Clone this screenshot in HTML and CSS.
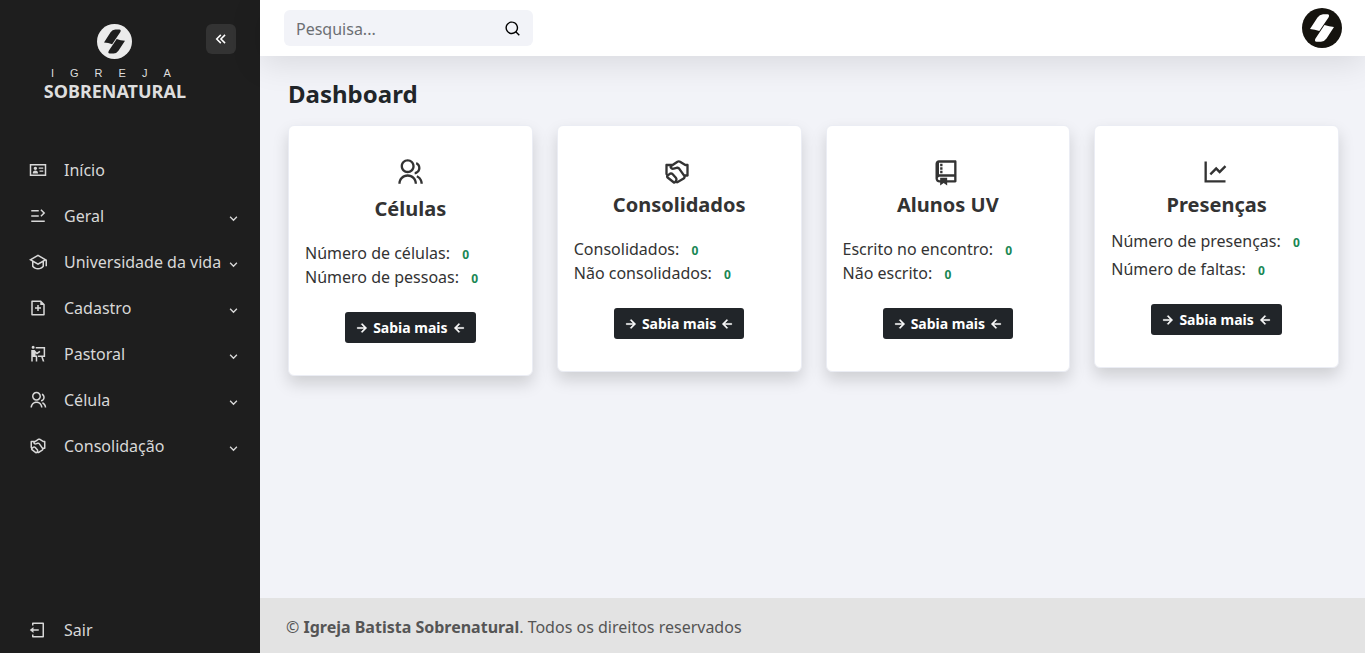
FILE: index.html
```html
<!DOCTYPE html>
<html lang="pt-br">
<head>
<meta charset="utf-8">
<meta name="viewport" content="width=device-width, initial-scale=1">
<title>Dashboard</title>
<link rel="stylesheet" href="styles.css">
</head>
<body>
<svg class="sprite" aria-hidden="true">
  <symbol id="people" viewBox="0 0 24 24"><path d="M2 22C2 17.58 5.58 14 10 14S18 17.58 18 22H16C16 18.69 13.31 16 10 16S4 18.69 4 22ZM10 13C6.685 13 4 10.315 4 7S6.685 1 10 1 16 3.685 16 7 13.315 13 10 13ZM10 11C12.21 11 14 9.21 14 7S12.21 3 10 3 6 4.79 6 7 7.79 11 10 11ZM18.284 14.703C21.064 15.956 23 18.752 23 22H21C21 19.564 19.548 17.467 17.463 16.527ZM17.596 3.413C19.594 4.237 21 6.204 21 8.5 21 11.37 18.804 13.725 16 13.978V11.965C17.697 11.722 19 10.264 19 8.5 19 7.119 18.202 5.926 17.041 5.356Z"/></symbol>
  <symbol id="hands" viewBox="0 0 24 24"><path d="M11.8611 2.39057C12.8495 1.73163 14.1336 1.71797 15.1358 2.35573L19.291 4.99994H20.9998C21.5521 4.99994 21.9998 5.44766 21.9998 5.99994V14.9999C21.9998 15.5522 21.5521 15.9999 20.9998 15.9999H19.4801C19.5396 16.9472 19.0933 17.9102 18.1955 18.4489L13.1021 21.505C12.4591 21.8907 11.6609 21.8817 11.0314 21.4974C10.3311 22.1167 9.2531 22.1849 8.47104 21.5704L3.33028 17.5312C2.56387 16.9291 2.37006 15.9003 2.76579 15.0847C2.28248 14.7057 2 14.1254 2 13.5109V6C2 5.44772 2.44772 5 3 5H7.94693L11.8611 2.39057ZM4.17264 13.6452L4.86467 13.0397C6.09488 11.9632 7.96042 12.0698 9.06001 13.2794L11.7622 16.2518C12.6317 17.2083 12.7903 18.6135 12.1579 19.739L17.1665 16.7339C17.4479 16.5651 17.5497 16.2276 17.4448 15.9433L13.0177 9.74551C12.769 9.39736 12.3264 9.24598 11.9166 9.36892L9.43135 10.1145C8.37425 10.4316 7.22838 10.1427 6.44799 9.36235L6.15522 9.06958C5.58721 8.50157 5.44032 7.69318 5.67935 7H4V13.5109L4.17264 13.6452ZM14.0621 4.04306C13.728 3.83047 13.3 3.83502 12.9705 4.05467L7.56943 7.65537L7.8622 7.94814C8.12233 8.20827 8.50429 8.30456 8.85666 8.19885L11.3419 7.45327C12.5713 7.08445 13.8992 7.53859 14.6452 8.58303L18.5144 13.9999H19.9998V6.99994H19.291C18.9106 6.99994 18.5381 6.89148 18.2172 6.68727L14.0621 4.04306ZM6.18168 14.5448L4.56593 15.9586L9.70669 19.9978L10.4106 18.7659C10.6256 18.3897 10.5738 17.9178 10.2823 17.5971L7.58013 14.6247C7.2136 14.2215 6.59175 14.186 6.18168 14.5448Z"/></symbol>
  <symbol id="book" viewBox="0 0 24 24"><path d="M13 21V23.5L10 21.5L7 23.5V21H6.5C4.567 21 3 19.433 3 17.5V5C3 3.343 4.343 2 6 2H20C20.552 2 21 2.448 21 3V20C21 20.552 20.552 21 20 21H13ZM13 19H19V16H6.5C5.672 16 5 16.672 5 17.5S5.672 19 6.5 19H7V17H13V19ZM19 14V4H6V14.035C6.163 14.012 6.33 14 6.5 14H19ZM7 5H9V7H7V5ZM7 8H9V10H7V8ZM7 11H9V13H7V11Z"/></symbol>
  <symbol id="chart" viewBox="0 0 24 24"><path d="M5 3V19H21V21H3V3H5ZM20.293 6.293L21.707 7.707L16 13.414L13 10.415L8.707 14.707L7.293 13.293L13 7.586L16 10.585Z"/></symbol>
  <symbol id="idcard" viewBox="0 0 24 24"><path d="M1 4H23V20H1ZM3 6V18H21V6ZM5 16.5C5 13.8 6.2 12.8 8.5 12.8S12 13.8 12 16.5ZM8.5 7.5A2.3 2.3 0 1 1 8.5 12.1A2.3 2.3 0 1 1 8.5 7.5ZM13 8.5H19V10.3H13ZM14 12.5H19V14.3H14Z"/></symbol>
  <symbol id="list" viewBox="0 0 24 24"><path d="M3 4H13V6H3ZM3 11H13V13H3ZM3 18H21V20H3ZM16.6 3L21.6 8L16.6 13L15.2 11.6L18.8 8L15.2 4.4Z"/></symbol>
  <symbol id="cap" viewBox="0 0 24 24"><path d="M4 11.333L0 9L12 2L24 9V17.5H22V10.167L20 11.333V18.011L19.777 18.286C17.946 20.55 15.142 22 12 22S6.054 20.55 4.223 18.286L4 18.011ZM6 12.5V17.292C7.467 18.954 9.611 20 12 20S16.533 18.954 18 17.292V12.5L12 16ZM3.969 9L12 13.685L20.031 9L12 4.315Z"/></symbol>
  <symbol id="fileadd" viewBox="0 0 24 24"><path d="M15 4H5V20H19V8H15V4ZM3 3C3 2.444 3.447 2 4 2H16L21 7V21C21 21.549 20.555 22 20 22H4C3.445 22 3 21.545 3 21ZM11 11V8H13V11H16V13H13V16H11V13H8V11Z"/></symbol>
  <symbol id="teach" viewBox="0 0 24 24"><path d="M5.500 1A2 2 0 1 1 5.500 5A2 2 0 1 1 5.500 1ZM9 2.500H21.500V16H18.500L20.500 22H18.300L16.300 16H12V14H19.500V4.500H9ZM3 6.500H7.500L10.500 10L14 7.500L15.200 9.200L10.500 12.500L8.800 11V14H11V22H9V16H5V22H3Z"/></symbol>
  <symbol id="exit" viewBox="0 0 24 24"><path d="M4 18H6V20H18V4H6V6H4V3C4 2.448 4.448 2 5 2H19C19.552 2 20 2.448 20 3V21C20 21.552 19.552 22 19 22H5C4.448 22 4 21.552 4 21ZM6 11H13V13H6V16L1 12L6 8Z"/></symbol>
  <symbol id="search" viewBox="0 0 24 24"><path d="M18.031 16.617L22.314 20.899L20.899 22.314L16.617 18.031C15.077 19.263 13.124 20 11 20C6.032 20 2 15.968 2 11S6.032 2 11 2S20 6.032 20 11C20 13.124 19.263 15.077 18.031 16.617ZM16.025 15.875C17.248 14.615 18 12.896 18 11C18 7.133 14.867 4 11 4S4 7.133 4 11S7.133 18 11 18C12.896 18 14.615 17.248 15.875 16.025Z"/></symbol>
  <symbol id="double" viewBox="0 0 24 24"><path d="M4.836 12L11.043 18.207L12.457 16.793L7.664 12L12.457 7.207L11.043 5.793ZM10.486 12L16.693 18.207L18.107 16.793L13.314 12L18.107 7.207L16.693 5.793Z"/></symbol>
  <symbol id="right" viewBox="0 0 24 24"><path d="M16.172 11L10.808 5.636L12.222 4.222L20 12L12.222 19.778L10.808 18.364L16.172 13H4V11Z"/></symbol>
  <symbol id="left" viewBox="0 0 24 24"><path d="M7.828 11H20V13H7.828L13.192 18.364L11.778 19.778L4 12L11.778 4.222L13.192 5.636Z"/></symbol>
  <symbol id="down" viewBox="0 0 8 8"><path d="M1 2.5L4 5.5L7 2.5" fill="none" stroke="currentColor" stroke-width="1.2"/></symbol>
  <symbol id="brand" viewBox="0 0 40 40"><circle cx="20" cy="20" r="20"/><path class="bolt" d="M8 21L15.500 9.500Q17.500 6.500 21 6.300H25.500Q28 6.500 26.500 9.500L17.300 23Q13 21.300 8 21ZM32 19L24.500 30.500Q22.500 33.500 19 33.700H14.500Q12 33.500 13.500 30.500L22.500 17Q27 18.700 32 19Z"/></symbol>
</svg>

<div class="layout">
  <aside class="sidebar">
    <div class="sidebar-head">
      <a class="logo" href="#">
        <svg class="logo-mark"><use href="#brand"/></svg>
        <span class="logo-top">IGREJA</span>
        <span class="logo-name">SOBRENATURAL</span>
      </a>
      <button class="collapse" type="button" aria-label="Recolher menu"><svg class="icon"><use href="#double"/></svg></button>
    </div>
    <nav class="menu">
      <a class="item" href="#"><svg class="icon"><use href="#idcard"/></svg><span class="label">Início</span></a>
      <a class="item" href="#"><svg class="icon"><use href="#list"/></svg><span class="label">Geral</span><svg class="caret"><use href="#down"/></svg></a>
      <a class="item" href="#"><svg class="icon"><use href="#cap"/></svg><span class="label">Universidade da vida</span><svg class="caret"><use href="#down"/></svg></a>
      <a class="item" href="#"><svg class="icon"><use href="#fileadd"/></svg><span class="label">Cadastro</span><svg class="caret"><use href="#down"/></svg></a>
      <a class="item" href="#"><svg class="icon"><use href="#teach"/></svg><span class="label">Pastoral</span><svg class="caret"><use href="#down"/></svg></a>
      <a class="item" href="#"><svg class="icon"><use href="#people"/></svg><span class="label">Célula</span><svg class="caret"><use href="#down"/></svg></a>
      <a class="item" href="#"><svg class="icon"><use href="#hands"/></svg><span class="label">Consolidação</span><svg class="caret"><use href="#down"/></svg></a>
    </nav>
    <a class="item" href="#"><svg class="icon"><use href="#exit"/></svg><span class="label">Sair</span></a>
  </aside>

  <div class="page">
    <header class="topbar">
      <form class="search">
        <input class="search-input" type="search" placeholder="Pesquisa..." aria-label="Pesquisa">
        <button class="search-button" type="button" aria-label="Buscar"><svg class="icon"><use href="#search"/></svg></button>
      </form>
      <a class="avatar" href="#" aria-label="Perfil"><svg class="avatar-mark"><use href="#brand"/></svg></a>
    </header>

    <main class="content">
      <h1 class="title">Dashboard</h1>
      <div class="cards">
        <section class="card card-tall">
          <svg class="card-icon"><use href="#people"/></svg>
          <h2 class="card-title">Células</h2>
          <div class="stats">
            <p class="stat">Número de células: <strong class="count">0</strong></p>
            <p class="stat">Número de pessoas: <strong class="count">0</strong></p>
          </div>
          <a class="more" href="#"><svg class="arrow"><use href="#right"/></svg>Sabia mais<svg class="arrow"><use href="#left"/></svg></a>
        </section>
        <section class="card">
          <svg class="card-icon"><use href="#hands"/></svg>
          <h2 class="card-title">Consolidados</h2>
          <div class="stats">
            <p class="stat">Consolidados: <strong class="count">0</strong></p>
            <p class="stat">Não consolidados: <strong class="count">0</strong></p>
          </div>
          <a class="more" href="#"><svg class="arrow"><use href="#right"/></svg>Sabia mais<svg class="arrow"><use href="#left"/></svg></a>
        </section>
        <section class="card">
          <svg class="card-icon"><use href="#book"/></svg>
          <h2 class="card-title">Alunos UV</h2>
          <div class="stats">
            <p class="stat">Escrito no encontro: <strong class="count">0</strong></p>
            <p class="stat">Não escrito: <strong class="count">0</strong></p>
          </div>
          <a class="more" href="#"><svg class="arrow"><use href="#right"/></svg>Sabia mais<svg class="arrow"><use href="#left"/></svg></a>
        </section>
        <section class="card">
          <svg class="card-icon"><use href="#chart"/></svg>
          <h2 class="card-title">Presenças</h2>
          <div class="stats stats-spaced">
            <p class="stat">Número de presenças: <strong class="count">0</strong></p>
            <p class="stat">Número de faltas: <strong class="count">0</strong></p>
          </div>
          <a class="more" href="#"><svg class="arrow"><use href="#right"/></svg>Sabia mais<svg class="arrow"><use href="#left"/></svg></a>
        </section>
      </div>
    </main>

    <footer class="footer">© <strong>Igreja Batista Sobrenatural</strong>. Todos os direitos reservados</footer>
  </div>
</div>
</body>
</html>
```
FILE: styles.css
```css
* { box-sizing: border-box; }
body {
  margin: 0;
  font: 16px/24px "Noto Sans", sans-serif;
  color: #333;
  background: #f2f3f8;
}
a { color: inherit; text-decoration: none; }
h1, h2, p { margin: 0; }
svg { fill: currentColor; flex: none; }
.sprite { display: none; }
.layout { display: flex; min-height: 100vh; }

.sidebar {
  display: flex;
  flex-direction: column;
  flex: none;
  width: 260px;
  color: #d8d8d8;
  background: #1e1e1e;
}
.sidebar-head {
  display: flex;
  justify-content: space-between;
  align-items: flex-start;
  padding: 24px 24px 0 43px;
}
.logo { display: flex; flex-direction: column; align-items: center; color: #dedede; }
.logo-mark { width: 35px; height: 35px; color: #ebebeb; --bolt: #1e1e1e; }
.bolt { fill: var(--bolt); }
.logo-top {
  margin-top: 8px;
  padding-left: 8px;
  font: 11px/12px "Liberation Sans", sans-serif;
  letter-spacing: 16px;
}
.logo-name { font-size: 18px; font-weight: 700; line-height: 24px; }
.collapse {
  display: grid;
  place-items: center;
  width: 30px;
  height: 30px;
  padding: 0;
  border: 0;
  border-radius: 6px;
  color: #fff;
  background: #333;
}
.icon { width: 18px; height: 18px; }
.menu { flex: 1; padding-top: 44px; }
.item {
  display: flex;
  align-items: center;
  height: 46px;
  padding: 0 22px 0 29px;
}
.label { flex: 1; padding-left: 17px; white-space: nowrap; }
.caret { width: 9px; height: 9px; margin-top: 5px; }

.page { display: flex; flex: 1; flex-direction: column; min-width: 0; }
.topbar {
  display: flex;
  justify-content: space-between;
  align-items: center;
  height: 56px;
  padding: 0 23px 0 24px;
  background: #fff;
  box-shadow: 0 8px 32px rgba(0, 0, 0, 0.1);
}
.search {
  display: flex;
  align-items: center;
  width: 249px;
  height: 36px;
  padding: 0 12px;
  border-radius: 6px;
  background: #f2f3f8;
}
.search-input {
  flex: 1;
  min-width: 0;
  padding: 2px 0 0;
  border: 0;
  outline: 0;
  font: inherit;
  background: none;
}
.search-input::placeholder { color: #6c6f73; }
.search-button { display: flex; padding: 0; border: 0; color: #000; background: none; }
.search-button .icon { width: 17px; height: 17px; }
.avatar { display: flex; color: #15130e; --bolt: #fff; }
.avatar-mark { width: 40px; height: 40px; }

.content { flex: 1; padding: 23px 26px 24px 28px; }
.title { font-size: 24px; line-height: 29px; color: #212529; }
.cards {
  display: grid;
  grid-template-columns: repeat(4, 1fr);
  gap: 24px;
  align-items: start;
  padding-top: 17px;
}
.card {
  display: flex;
  flex-direction: column;
  align-items: center;
  padding: 32px 16px;
  border: 1px solid #ebedf4;
  border-radius: 6px;
  background: #fff;
  box-shadow: 0 8px 16px rgba(0, 0, 0, 0.15);
}
.card-icon { width: 28px; height: 28px; margin-right: 4px; }
.card-title { margin-top: 7px; font-size: 20px; line-height: 24px; }
.card-tall .card-icon { margin-right: 0; }
.card-tall .card-title { margin-top: 11px; }
.stats { display: grid; align-self: stretch; margin: 20px 0 23px; }
.stats-spaced { gap: 4px; margin-top: 12px; }
.count { padding: 0 8px; font-size: 12px; line-height: 12px; color: #198754; }
.more {
  display: flex;
  align-items: center;
  gap: 4px;
  padding: 5px 10px;
  border-radius: 3px;
  font-size: 14px;
  font-weight: 700;
  line-height: 21px;
  color: #fff;
  background: #212529;
}
.arrow { width: 14px; height: 14px; stroke: currentColor; }

.footer { padding: 17px 26px 14px; color: #555; background: #e3e3e3; }
```
